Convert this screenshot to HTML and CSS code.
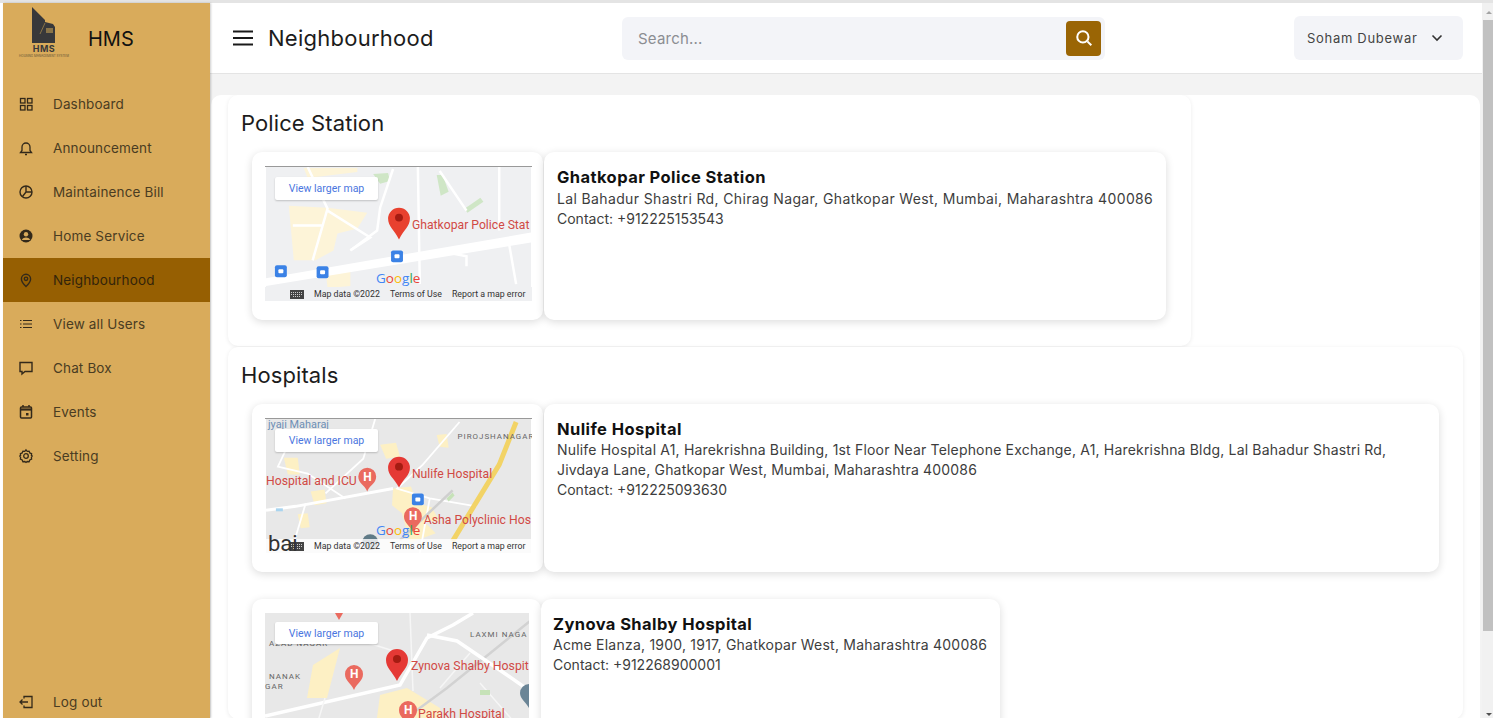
FILE: index.html
```html
<!DOCTYPE html>
<html lang="en">
<head>
    <meta charset="UTF-8">
    <meta name="viewport" content="width=device-width, initial-scale=1.0">
    <title>Neighbourhood</title>
    <link rel="stylesheet" href="styles.css">
</head>
<body>
    <div class="page">
        <aside class="sidebar">
            <div class="brand">
                <div class="logo">
                    <svg width="24" height="37" viewBox="0 0 24 37">
                        <path d="M0 0 L13 13 L13 15 L21 17 L23 20 L23 36 L0 36 Z" fill="#38383a"/>
                        <path d="M8 27 L13 16" stroke="#8a7448" stroke-width="1" fill="none"/>
                        <rect x="14" y="21" width="7" height="5" fill="#8a7448"/>
                    </svg>
                    <span class="logo-name">HMS</span>
                    <span class="logo-sub">HOUSING MANAGEMENT SYSTEM</span>
                </div>
                <span class="brand-name">HMS</span>
            </div>
            <nav class="nav">
                <a class="nav-item">
                    <svg class="nav-icon" viewBox="0 0 16 16" fill="none" stroke="currentColor" stroke-width="1.3"><rect x="2.5" y="2.5" width="4.5" height="4.5"/><rect x="9.5" y="2.5" width="4.5" height="4.5"/><rect x="2.5" y="9.5" width="4.5" height="4.5"/><rect x="9.5" y="9.5" width="4.5" height="4.5"/></svg>
                    Dashboard
                </a>
                <a class="nav-item">
                    <svg class="nav-icon" viewBox="0 0 16 16" fill="none" stroke="currentColor" stroke-width="1.3"><path d="M2.5 12.5h11l-1.5-2V7a4 4 0 0 0-8 0v3.5z"/><path d="M7 14.5h2"/></svg>
                    Announcement
                </a>
                <a class="nav-item">
                    <svg class="nav-icon" viewBox="0 0 16 16" fill="none" stroke="currentColor" stroke-width="1.4"><circle cx="8" cy="8" r="6"/><path d="M8 2v6h6M8 8l-3.5 4.5"/></svg>
                    Maintainence Bill
                </a>
                <a class="nav-item">
                    <svg class="nav-icon" viewBox="0 0 16 16"><circle cx="8" cy="8" r="6.5" fill="currentColor"/><circle cx="8" cy="6.3" r="2.2" fill="#d9ab5b"/><path d="M3.8 12c1-2 2.5-2.6 4.2-2.6s3.2.6 4.2 2.6z" fill="#d9ab5b"/></svg>
                    Home Service
                </a>
                <a class="nav-item active">
                    <svg class="nav-icon" viewBox="0 0 16 16" fill="none" stroke="currentColor" stroke-width="1.4"><path d="M8 14.5c-3-3-4.6-5.2-4.6-7.6a4.6 4.6 0 0 1 9.2 0c0 2.4-1.6 4.6-4.6 7.6z"/><circle cx="8" cy="6.8" r="1.7"/></svg>
                    Neighbourhood
                </a>
                <a class="nav-item">
                    <svg class="nav-icon" viewBox="0 0 16 16" fill="none" stroke="currentColor" stroke-width="1.2"><path d="M5 4.5h9M5 8h9M5 11.5h9M2 4.5h1.500M2 8h1.500M2 11.500h1.500"/></svg>
                    View all Users
                </a>
                <a class="nav-item">
                    <svg class="nav-icon" viewBox="0 0 16 16" fill="none" stroke="currentColor" stroke-width="1.4"><path d="M2 2.5h12v9H7l-3 2.5v-2.500H2z"/></svg>
                    Chat Box
                </a>
                <a class="nav-item">
                    <svg class="nav-icon" viewBox="0 0 16 16" fill="none" stroke="currentColor" stroke-width="1.5"><rect x="2.5" y="3" width="11" height="11" rx="1"/><path d="M2.500 5.500h11" stroke-width="2.2"/><path d="M5 1v2M11 1v2"/><rect x="8" y="9" width="2.5" height="2.5" fill="currentColor" stroke="none"/></svg>
                    Events
                </a>
                <a class="nav-item">
                    <svg class="nav-icon" viewBox="0 0 16 16" fill="none" stroke="currentColor" stroke-width="1.3"><path d="M8 1.800l1.200 1.500 1.900-.2.7 1.800 1.800.7-.2 1.900L14.200 8l-.8 1.500.2 1.700-1.800.7-.7 1.800-1.900-.2L8 14.500l-1.200-1-1.900.2-.7-1.800-1.800-.7.2-1.700L1.800 8l.8-.5-.2-1.900 1.800-.7.7-1.800 1.900.2z"/><circle cx="8" cy="8" r="2.3"/></svg>
                    Setting
                </a>
            </nav>
            <a class="nav-item logout">
                <svg class="nav-icon" viewBox="0 0 16 16" fill="none" stroke="currentColor" stroke-width="1.3"><path d="M6 4.500V2.500h8v11H6v-2"/><path d="M10 8H2M4.500 5.500L2 8l2.500 2.500"/></svg>
                Log out
            </a>
        </aside>

        <div class="main">
            <header class="topbar">
                <div class="title-wrap">
                    <svg class="menu-icon" width="22" height="18" viewBox="0 0 22 18" fill="none" stroke="#1a1a1a" stroke-width="2.2"><path d="M1 2.500h20M1 9h20M1 15.500h20"/></svg>
                    <h1 class="page-title">Neighbourhood</h1>
                </div>
                <div class="search">
                    <span class="search-text">Search...</span>
                    <button class="search-btn">
                        <svg width="18" height="18" viewBox="0 0 16 16" fill="none" stroke="#fff" stroke-width="1.8"><circle cx="7" cy="7" r="5"/><path d="M11 11l3.500 3.500"/></svg>
                    </button>
                </div>
                <div class="user">
                    <span>Soham Dubewar</span>
                    <svg width="12" height="8" viewBox="0 0 12 8" fill="none" stroke="#333" stroke-width="1.6"><path d="M1.500 1.500L6 6l4.500-4.500"/></svg>
                </div>
            </header>

            <div class="content">
                <div class="panel">
                    <section class="group group-police">
                        <h2 class="group-title">Police Station</h2>
                        <div class="place">
                            <div class="map-card">
                                <div class="map">
                                    <svg class="map-art" viewBox="0 0 267 135">
                                        <rect width="267" height="135" fill="#eff0f2"/>
                                        <path d="M23 39L62 41 102 46 92 62 72 67 68 84 50 94 28 94z" fill="#fdf4d8"/>
                                        <path d="M60 104L85 100 85 120 62 122zM38 1H92V5L42 11z" fill="#fdf4d8"/>
                                        <path d="M108 7l15-1 2 8-10 3z" fill="#cfe6c6"/>
                                        <path d="M172 8l6 0 6 17-8 4z" fill="#cfe6c6"/>
                                        <path d="M200 42l16-11 3 4-16 11z" fill="#cfe6c6"/>
                                        <g fill="none" stroke="#fff" stroke-width="2.5">
                                            <path d="M42 0L62 42 47 94M62 44L105 71 85 84M27 59H58"/>
                                            <path d="M128 2L115 41 112 64 85 84M153 0L155 118"/>
                                            <path d="M175 4L202 44M235 0V64M245 78L252 118M172 84L202 90 202 100"/>
                                        </g>
                                        <path d="M0 112L267 66V76L0 120z" fill="#fff"/>
                                        <path d="M134 73c-5-10-11-13-11-21a11 11 0 0 1 22 0c0 8-6 11-11 21z" fill="#e8412f"/>
                                        <circle cx="134" cy="51" r="4" fill="#a51c12"/>
                                        <text class="map-label" x="147" y="62">Ghatkopar Police Stat</text>
                                        <rect x="9" y="99" width="12" height="12" rx="2" fill="#3b82e6"/>
                                        <rect x="12.500" y="103" width="5" height="4" rx="1" fill="#fff"/>
                                        <rect x="51" y="100" width="12" height="12" rx="2" fill="#3b82e6"/>
                                        <rect x="54.500" y="104" width="5" height="4" rx="1" fill="#fff"/>
                                        <rect x="126" y="84" width="12" height="12" rx="2" fill="#3b82e6"/>
                                        <rect x="129.500" y="88" width="5" height="4" rx="1" fill="#fff"/>
                                    </svg>
                                    <span class="map-link">View larger map</span>
                                    <span class="google"><i class="g-b">G</i><i class="g-r">o</i><i class="g-y">o</i><i class="g-b">g</i><i class="g-g">l</i><i class="g-r">e</i></span>
                                    <div class="map-foot foot-clear">
                                        <svg class="keyboard" width="14" height="9" viewBox="0 0 14 9"><rect width="14" height="9" fill="#444"/><path d="M1 2.500h12M1 4.500h12M3 6.500h8" stroke="#ccc" stroke-dasharray="1 1"/></svg>
                                        <span>Map data ©2022</span><span>Terms of Use</span><span>Report a map error</span>
                                    </div>
                                </div>
                            </div>
                            <div class="info info-police">
                                <h3 class="info-name">Ghatkopar Police Station</h3>
                                <p class="info-text">Lal Bahadur Shastri Rd, Chirag Nagar, Ghatkopar West, Mumbai, Maharashtra 400086</p>
                                <p class="info-text info-contact">Contact: +912225153543</p>
                            </div>
                        </div>
                    </section>

                    <section class="group group-hospitals">
                        <h2 class="group-title">Hospitals</h2>
                        <div class="place">
                            <div class="map-card">
                                <div class="map">
                                    <svg class="map-art" viewBox="0 0 267 135">
                                        <rect width="267" height="135" fill="#e8e8e8"/>
                                        <path d="M115 26l16-2 4 14-14 2zM172 16l10-1 2 14-9-1zM18 39l14 0 2 17-12 0zM45 73l14-2 2 14-12 2zM32 96l10-1 2 14-9 1z" fill="#fdf0c4"/>
                                        <path d="M128 70l18-2 6 17 15 4 8 14-16 0 12 12-26 10-8-30-10-8z" fill="#fdf0c4"/>
                                        <path d="M0 92L30 88 128 70" fill="none" stroke="#fff" stroke-width="3"/>
                                        <g fill="none" stroke="#fff" stroke-width="1.8">
                                            <path d="M195 3L158 46 132 70 165 80 212 88M30 10L12 48 42 55 80 80M110 0L98 40 60 75M165 80L155 135M40 85L25 135"/>
                                        </g>
                                        <path d="M188 72L135 122" stroke="#cfcfcf" stroke-width="2.5"/>
                                        <path d="M252 3L235 46 188 123" fill="none" stroke="#f2d366" stroke-width="5"/>
                                        <path d="M10 90h7v3h-7z" fill="#a9d4ef"/>
                                        <path d="M182 80l6-6 2 3-6 6z" fill="#c6e2b8"/>
                                        <path d="M134 69c-5-10-11-12-11-20a11 11 0 0 1 22 0c0 8-6 10-11 20z" fill="#e53935"/>
                                        <circle cx="134" cy="48" r="4" fill="#a51c12"/>
                                        <text class="map-label" x="147" y="59">Nulife Hospital</text>
                                        <text class="map-label" x="0" y="66">Hospital and ICU</text>
                                        <path d="M102 73c-3-7-9-8-9-15a9 9 0 0 1 18 0c0 7-6 8-9 15z" fill="#ea6a5f"/>
                                        <text class="map-h" x="98" y="62">H</text>
                                        <path d="M148 114c-3-7-9-9-9-16a9 9 0 0 1 18 0c0 7-6 9-9 16z" fill="#ea6a5f"/>
                                        <text class="map-h" x="144" y="102">H</text>
                                        <text class="map-label" x="159" y="106">Asha Polyclinic Hos</text>
                                        <rect x="147" y="75" width="12" height="12" rx="2" fill="#3b82e6"/>
                                        <rect x="150.500" y="79" width="5" height="4" rx="1" fill="#fff"/>
                                        <text class="map-place" x="2" y="9">jyaji Maharaj</text>
                                        <text class="map-town" x="193" y="20">PIROJSHANAGAR</text>
                                        <circle cx="105" cy="124" r="8" fill="#5f7a86"/>
                                    </svg>
                                    <span class="map-link">View larger map</span>
                                    <span class="google"><i class="g-b">G</i><i class="g-r">o</i><i class="g-y">o</i><i class="g-b">g</i><i class="g-g">l</i><i class="g-r">e</i></span>
                                    <div class="map-foot">
                                        <svg class="keyboard" width="14" height="9" viewBox="0 0 14 9"><rect width="14" height="9" fill="#444"/><path d="M1 2.500h12M1 4.500h12M3 6.500h8" stroke="#ccc" stroke-dasharray="1 1"/></svg>
                                        <span>Map data ©2022</span><span>Terms of Use</span><span>Report a map error</span>
                                    </div>
                                    <span class="map-big">bai</span>
                                </div>
                            </div>
                            <div class="info info-nulife">
                                <h3 class="info-name">Nulife Hospital</h3>
                                <p class="info-text">Nulife Hospital A1, Harekrishna Building, 1st Floor Near Telephone Exchange, A1, Harekrishna Bldg, Lal Bahadur Shastri Rd, Jivdaya Lane, Ghatkopar West, Mumbai, Maharashtra 400086</p>
                                <p class="info-text info-contact">Contact: +912225093630</p>
                            </div>
                        </div>
                        <div class="place place-zynova">
                            <div class="map-card map-card-small">
                                <div class="map map-small">
                                    <svg class="map-art" viewBox="0 0 264 135">
                                        <rect width="264" height="135" fill="#e8e8e8"/>
                                        <path d="M48 52L75 35 62 85 42 85z" fill="#fdf0c4"/>
                                        <path d="M115 82L142 75 175 95 182 135H108z" fill="#fdf0c4"/>
                                        <path d="M265 8L182 75 148 100" fill="none" stroke="#d2d2d2" stroke-width="2.5"/>
                                        <g fill="none" stroke="#fff" stroke-width="3.500">
                                            <path d="M0 103L135 72 162 25 188 12 208 0"/>
                                            <path d="M162 22L192 28 242 62 265 78"/>
                                        </g>
                                        <g fill="none" stroke="#f6f6f6" stroke-width="1.500">
                                            <path d="M145 0L148 78M40 10L135 40M205 40L175 75M60 85L45 135M215 70L250 110"/>
                                        </g>
                                        <path d="M215 77h10v5h-10z" fill="#c6e2b8"/>
                                        <path d="M132 68c-5-10-11-13-11-21a11 11 0 0 1 22 0c0 8-6 11-11 21z" fill="#e53935"/>
                                        <circle cx="132" cy="46" r="4" fill="#a51c12"/>
                                        <text class="map-label" x="146" y="57">Zynova Shalby Hospit</text>
                                        <path d="M89 77c-3-7-9-9-9-16a9 9 0 0 1 18 0c0 7-6 9-9 16z" fill="#ea6a5f"/>
                                        <text class="map-h" x="85" y="65">H</text>
                                        <path d="M143 113c-3-7-9-9-9-16a9 9 0 0 1 18 0c0 7-6 9-9 16z" fill="#ea6a5f"/>
                                        <text class="map-h" x="139" y="101">H</text>
                                        <text class="map-label" x="153" y="105">Parakh Hospital</text>
                                        <path d="M264 95c-3-6-9-9-9-15a9 9 0 0 1 9-9z" fill="#6b8596"/>
                                        <path d="M70 0h8l-4 7z" fill="#ea6a5f"/>
                                        <text class="map-town" x="205" y="24">LAXMI NAGA</text>
                                        <text class="map-town" x="4" y="33">AZAD NAGAR</text>
                                        <text class="map-town" x="4" y="66">NANAK</text>
                                        <text class="map-town" x="0" y="76">GAR</text>
                                    </svg>
                                    <span class="map-link">View larger map</span>
                                </div>
                            </div>
                            <div class="info info-zynova">
                                <h3 class="info-name">Zynova Shalby Hospital</h3>
                                <p class="info-text">Acme Elanza, 1900, 1917, Ghatkopar West, Maharashtra 400086</p>
                                <p class="info-text info-contact">Contact: +912268900001</p>
                            </div>
                        </div>
                    </section>
                </div>
            </div>
        </div>

        <div class="scrollbar">
            <span class="scroll-arrow"></span>
            <div class="scroll-thumb"></div>
            <span class="scroll-arrow-down"></span>
        </div>
    </div>
</body>
</html>
```

FILE: styles.css
```css
* {
    box-sizing: border-box;
}

body {
    margin: 0;
    height: 718px;
    overflow: hidden;
    background: #ffffff;
    font-family: Inter, "Open Sans", sans-serif;
    color: #222;
}

.page {
    display: flex;
    height: 718px;
    padding: 3px 0 0 3px;
    background: linear-gradient(#e4e4e4 3px, #ffffff 3px);
}

/* sidebar */
.sidebar {
    width: 207px;
    flex-shrink: 0;
    display: flex;
    flex-direction: column;
    background: #d9ab5b;
    box-shadow: 1px 0 2px rgba(0, 0, 0, 0.2);
    z-index: 2;
}

.brand {
    height: 79px;
    display: flex;
    padding: 4px 0 0 19px;
}

.logo {
    width: 44px;
    display: flex;
    flex-direction: column;
    align-items: center;
}

.logo-name {
    font-size: 9px;
    line-height: 9px;
    font-weight: 700;
    color: #38383a;
    letter-spacing: 0.5px;
}

.logo-sub {
    font-size: 3px;
    line-height: 6px;
    color: #5f5236;
    white-space: nowrap;
}

.brand-name {
    margin: 17px 0 0 22px;
    font-size: 20px;
    line-height: 30px;
    color: #111;
}

.nav {
    flex: 1;
    display: flex;
    flex-direction: column;
}

.nav-item {
    height: 44px;
    flex-shrink: 0;
    display: flex;
    align-items: center;
    gap: 19px;
    padding-left: 15px;
    font-size: 13.5px;
    letter-spacing: 0.15px;
    color: #4a3c22;
}

.nav-item.active {
    background: #965f02;
    color: #33240a;
}

.nav-icon {
    width: 16px;
    height: 16px;
    color: #33291a;
}

.logout {
    height: 32px;
}

/* top bar */
.main {
    width: 1272px;
    flex-shrink: 0;
    display: flex;
    flex-direction: column;
    background: #f3f3f3;
}

.topbar {
    height: 71px;
    flex-shrink: 0;
    display: flex;
    align-items: center;
    background: #ffffff;
    border-bottom: 1px solid #e4e4e4;
    padding: 0 19px 0 22px;
}

.title-wrap {
    width: 390px;
    display: flex;
    align-items: center;
    gap: 14px;
}

.page-title {
    margin: 0;
    font-size: 22px;
    font-weight: 400;
    letter-spacing: 0.25px;
    color: #1c1c1c;
}

.search {
    width: 483px;
    height: 43px;
    display: flex;
    align-items: center;
    justify-content: space-between;
    background: #f3f4f8;
    border-radius: 6px;
    padding: 0 4px 0 16px;
}

.search-text {
    font-size: 15px;
    letter-spacing: 0.2px;
    color: #8b8d92;
}

.search-btn {
    width: 35px;
    height: 35px;
    display: flex;
    align-items: center;
    justify-content: center;
    padding: 0;
    border: 0;
    border-radius: 4px;
    background: #9a6505;
}

.user {
    width: 169px;
    height: 44px;
    margin-left: auto;
    display: flex;
    align-items: center;
    justify-content: space-between;
    padding: 0 20px 0 13px;
    background: #f3f4f8;
    border-radius: 6px;
    font-size: 13px;
    letter-spacing: 0.7px;
    color: #444;
}

/* content */
.content {
    flex: 1;
    min-height: 0;
    padding: 21px 2px 0 1px;
}

.panel {
    height: 100%;
    background: #ffffff;
    border-radius: 10px 10px 0 0;
    padding-left: 17px;
    overflow: hidden;
}

.group {
    background: #ffffff;
    border-radius: 10px;
    box-shadow: 0 1px 4px rgba(0, 0, 0, 0.08);
    padding: 14px 24px 0 13px;
}

.group-police {
    width: 963px;
    height: 251px;
    margin-bottom: 1px;
}

.group-hospitals {
    width: 1235px;
    height: 372px;
}

.group-title {
    margin: 0 0 15px 0;
    font-size: 22px;
    line-height: 28px;
    font-weight: 400;
    letter-spacing: 0.1px;
    color: #1c1c1c;
}

.place {
    display: flex;
    margin-left: 11px;
}

.place-zynova {
    margin-top: 27px;
}

.map-card {
    width: 291px;
    height: 168px;
    flex-shrink: 0;
    padding: 14px 0 0 13px;
    background: #ffffff;
    border-radius: 10px;
    box-shadow: 0 2px 8px rgba(0, 0, 0, 0.14);
}

.map-card-small {
    width: 289px;
}

.map {
    position: relative;
    width: 267px;
    height: 135px;
    overflow: hidden;
    border-top: 1px solid #999;
}

.map-small {
    width: 264px;
    border-top: 0;
}

.map-art {
    display: block;
    width: 100%;
    height: 100%;
}

.map-label {
    font-family: Roboto, sans-serif;
    font-size: 12.3px;
    fill: #d14a45;
}

.map-h {
    font-family: Roboto, sans-serif;
    font-size: 12px;
    font-weight: 700;
    fill: #fff;
}

.map-place {
    font-family: Roboto, sans-serif;
    font-size: 11px;
    fill: #6d8fb5;
}

.map-town {
    font-family: Roboto, sans-serif;
    font-size: 8px;
    letter-spacing: 1px;
    fill: #666;
}

.map-big {
    position: absolute;
    left: 3px;
    bottom: -4px;
    font-family: Roboto, sans-serif;
    font-size: 22px;
    line-height: 26px;
    color: #333;
}

.map-link {
    position: absolute;
    left: 10px;
    top: 10px;
    width: 103px;
    height: 23px;
    display: flex;
    align-items: center;
    justify-content: center;
    background: #ffffff;
    border-radius: 2px;
    box-shadow: 0 1px 2px rgba(0, 0, 0, 0.2);
    font-family: Roboto, sans-serif;
    font-size: 10.5px;
    color: #4a76e0;
}

.map-small .map-link {
    top: 9px;
    height: 22px;
}

.google {
    position: absolute;
    left: 111px;
    top: 103px;
    font-family: "Open Sans", sans-serif;
    font-size: 13.5px;
    line-height: 16px;
    z-index: 1;
}

.google i {
    font-style: normal;
}

.g-b { color: #4285f4; }
.g-r { color: #ea4335; }
.g-y { color: #fbbc05; }
.g-g { color: #34a853; }

.map-foot {
    position: absolute;
    left: 0;
    right: 0;
    bottom: 0;
    height: 14px;
    display: flex;
    align-items: center;
    padding-left: 25px;
    background: rgba(255, 255, 255, 0.8);
    font-family: Roboto, sans-serif;
    font-size: 8.8px;
    color: #333;
    white-space: nowrap;
}

.foot-clear {
    background: #eff0f2;
}

.map-foot span {
    margin-left: 10px;
}

.info {
    height: 168px;
    margin-left: 1px;
    padding: 14px 13px 0 13px;
    background: #ffffff;
    border-radius: 10px;
    box-shadow: 0 2px 8px rgba(0, 0, 0, 0.14);
}

.info-police {
    width: 622px;
    padding-right: 4px;
}

.info-police .info-name {
    line-height: 23px;
}

.info-nulife {
    width: 895px;
}

.info-zynova {
    width: 459px;
    margin-left: 0;
    padding: 14px 4px 0 12px;
}

.info-name {
    margin: 0;
    font-size: 16.5px;
    line-height: 22px;
    font-weight: 700;
    letter-spacing: 0.42px;
    color: #111;
}

.info-text {
    margin: 0;
    font-size: 14px;
    line-height: 20px;
    letter-spacing: 0.22px;
    color: #3d3d3d;
}

.info-police .info-text {
    letter-spacing: 0.36px;
}

.info-nulife .info-text {
    letter-spacing: 0.18px;
}

.info .info-contact {
    letter-spacing: 0;
}

/* scrollbar */
.scrollbar {
    width: 11px;
    flex-shrink: 0;
    display: flex;
    flex-direction: column;
    align-items: flex-end;
    background: #f1f1f1;
}

.scroll-arrow {
    margin: 8px 1px 6px 0;
    border-left: 3px solid transparent;
    border-right: 3px solid transparent;
    border-bottom: 3px solid #a3a3a3;
}

.scroll-thumb {
    width: 10px;
    height: 611px;
    background: #c1c1c1;
}

.scroll-arrow-down {
    margin: auto 1px 2px 0;
    border-left: 3px solid transparent;
    border-right: 3px solid transparent;
    border-top: 3px solid #505050;
}
```
